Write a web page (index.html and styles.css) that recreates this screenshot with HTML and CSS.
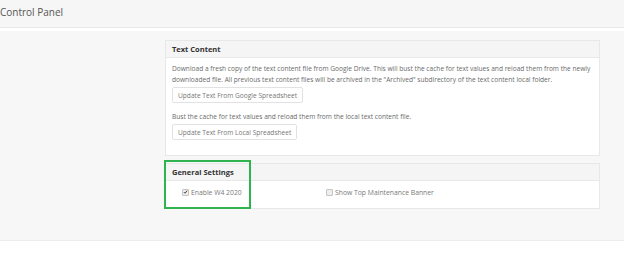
FILE: index.html
```html
<!DOCTYPE html>
<html lang="en">
<head>
    <meta charset="UTF-8">
    <meta name="viewport" content="width=device-width, initial-scale=1.0">
    <title>Control Panel</title>
    <link rel="stylesheet" href="styles.css">
</head>
<body>
    <div class="page-header">Control Panel</div>

    <div class="content">
        <!-- Text Content -->
        <div class="panel">
            <div class="panel-heading">Text Content</div>
            <div class="panel-body">
                <p>Download a fresh copy of the text content file from Google Drive. This will bust the cache for text values and reload them from the newly downloaded file. All previous text content files will be archived in the "Archived" subdirectory of the text content local folder.</p>
                <button class="btn">Update Text From Google Spreadsheet</button>
                <p>Bust the cache for text values and reload them from the local text content file.</p>
                <button class="btn">Update Text From Local Spreadsheet</button>
            </div>
        </div>

        <!-- General Settings -->
        <div class="panel panel-settings">
            <div class="highlight"></div>
            <div class="panel-heading">General Settings</div>
            <div class="panel-body settings">
                <label class="check"><span class="box"><svg viewBox="0 0 8 8"><path d="M1.5 4.2 L3.3 6 L6.6 1.8" fill="none" stroke="#333" stroke-width="1.5"/></svg></span>Enable W4 2020</label>
                <label class="check"><span class="box"></span>Show Top Maintenance Banner</label>
            </div>
        </div>
    </div>
</body>
</html>
```

FILE: styles.css
```css
body {
    margin: 0;
    font-family: "Open Sans", "Liberation Sans", sans-serif;
    background-color: #fff;
    color: #6a6a6a;
}

.page-header {
    height: 27px;
    line-height: 25px;
    font-size: 10px;
    color: #555;
    background-color: #f6f6f6;
    border-bottom: 1px solid #e8e8e8;
}

.content {
    margin-top: 3px;
    background-color: #f7f7f7;
    border-bottom: 1px solid #ececec;
    padding: 9px 24px 31px 165px;
}

.panel {
    width: 433px;
    background-color: #fff;
    border: 1px solid #e8e8e8;
}

.panel-settings {
    position: relative;
    margin-top: 7px;
}

.panel-heading {
    background-color: #f5f5f5;
    border-bottom: 1px solid #e8e8e8;
    padding: 0 6px;
    height: 16px;
    line-height: 16px;
    font-size: 7.5px;
    font-weight: 700;
    color: #333;
}

.panel-body {
    padding: 5px 6px 15px;
}

p {
    margin: 0 0 2px;
    font-size: 6.6px;
    line-height: 11px;
}

.btn {
    display: block;
    font-family: inherit;
    font-size: 6.6px;
    color: #777;
    background-color: #fff;
    border: 1px solid #e2e2e2;
    border-radius: 2px;
    height: 16px;
    padding: 0 5px;
    margin: 0 0 8px;
}

.btn:last-child {
    margin-bottom: 0;
}

.settings {
    display: grid;
    grid-template-columns: 144px 1fr;
    padding: 6px 6px 10px 16px;
}

.check {
    display: flex;
    align-items: center;
    gap: 2px;
    font-size: 6.8px;
    color: #7a7a7a;
    line-height: 11px;
}

.box {
    width: 5px;
    height: 5px;
    border: 1px solid #c4c4c4;
    background-color: #eee;
    border-radius: 1px;
    display: flex;
}

.box svg {
    width: 6px;
    height: 6px;
    margin: -1px 0 0 0;
}

/* annotation box */
.highlight {
    position: absolute;
    left: -2px;
    top: -4px;
    width: 83px;
    height: 45px;
    border: 2px solid #2fb34e;
}
```
